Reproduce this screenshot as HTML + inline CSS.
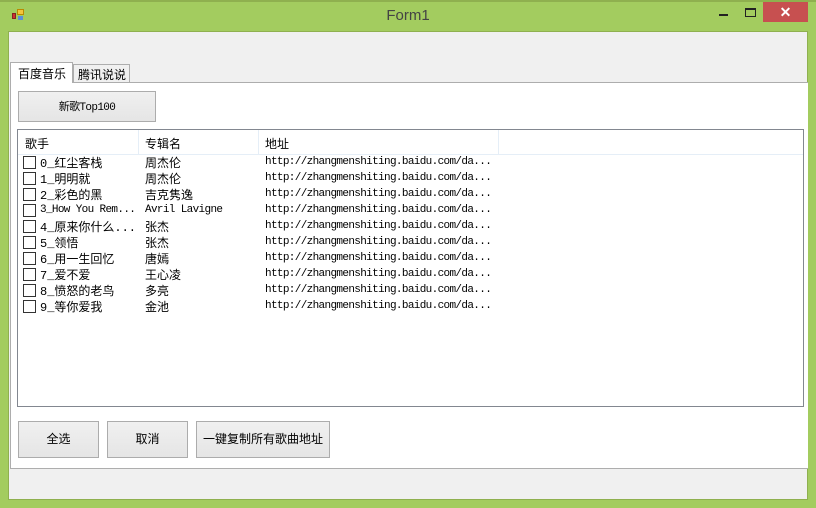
<!DOCTYPE html><html><head><style>
*{margin:0;padding:0;box-sizing:border-box}
body{width:816px;height:508px;background:#a3cc5f;position:relative;overflow:hidden;font-family:"Liberation Sans","Noto Sans CJK SC",sans-serif;font-size:12px;color:#000}
.a{position:absolute}
.btn{position:absolute;background:linear-gradient(#f0f0f0,#e5e5e5);border:1px solid #acacac;text-align:center;font-size:12px}
.mono{font-family:"Liberation Mono","Noto Sans CJK SC",monospace;font-size:11px;letter-spacing:-0.65px;white-space:nowrap}
.s{font-family:"Liberation Mono","Noto Sans CJK SC",monospace;font-size:12px;white-space:nowrap}
.row{position:absolute;left:23px;height:16px;width:600px}
.cb{position:absolute;left:0;top:1px;width:13px;height:13px;border:1px solid #333;background:#fff}
</style></head><body>
<div class="a" style="left:0;top:0;width:816px;height:2px;background:#8fb04f"></div>
<div class="a" style="left:12px;top:9px;width:13px;height:12px">
<div class="a" style="left:0;top:4px;width:4px;height:6px;background:#c33;border:1px solid #822"></div>
<div class="a" style="left:5px;top:0;width:7px;height:6px;background:#f3c53a;border:1px solid #b80"></div>
<div class="a" style="left:6px;top:7px;width:5px;height:4px;background:#5a8fd8"></div></div>
<div class="a" style="left:0;top:7px;width:816px;text-align:center;font-size:15px;color:#444">Form1</div>
<div class="a" style="left:719px;top:14px;width:9px;height:2px;background:#222"></div>
<div class="a" style="left:745px;top:8px;width:11px;height:9px;border:1px solid #222;border-top-width:2px"></div>
<div class="a" style="left:763px;top:2px;width:45px;height:20px;background:#c75050;color:#fff;text-align:center;font-size:14px;line-height:20px;font-weight:bold">✕</div>
<div class="a" style="left:8px;top:31px;width:800px;height:469px;background:#f0f0f0;border:1px solid #8fb04f"></div>
<div class="a" style="left:10px;top:82px;width:798px;height:387px;background:#fff;border:1px solid #adadad;border-right:none"></div>
<div class="a" style="left:10px;top:62px;width:63px;height:21px;background:#fff;border:1px solid #adadad;border-bottom:none;padding:2px 0 0 7px">百度音乐</div>
<div class="a" style="left:73px;top:64px;width:57px;height:18px;background:#f0f0f0;border:1px solid #adadad;border-bottom:none;padding:1px 0 0 4px">腾讯说说</div>
<div class="btn" style="left:18px;top:91px;width:138px;height:31px;line-height:29px"><span class="mono">新歌Top100</span></div>
<div class="a" style="left:17px;top:129px;width:787px;height:278px;border:1px solid #828790;background:#fff"></div>
<div class="a" style="left:18px;top:130px;width:785px;height:25px;border-bottom:1px solid #e5eef7"></div>
<div class="a" style="left:138px;top:130px;width:1px;height:24px;background:#e5eef7"></div>
<div class="a" style="left:258px;top:130px;width:1px;height:24px;background:#e5eef7"></div>
<div class="a" style="left:498px;top:130px;width:1px;height:24px;background:#e5eef7"></div>
<div class="a" style="left:25px;top:135px">歌手</div>
<div class="a" style="left:145px;top:135px">专辑名</div>
<div class="a" style="left:265px;top:135px">地址</div>
<div class="row" style="top:155px"><div class="cb"></div><span class="a s" style="left:17px;top:-1px">0_红尘客栈</span><span class="a" style="left:122px;top:-1px">周杰伦</span><span class="a mono" style="left:242px;top:1px">http://zhangmenshiting.baidu.com/da...</span></div>
<div class="row" style="top:171px"><div class="cb"></div><span class="a s" style="left:17px;top:-1px">1_明明就</span><span class="a" style="left:122px;top:-1px">周杰伦</span><span class="a mono" style="left:242px;top:1px">http://zhangmenshiting.baidu.com/da...</span></div>
<div class="row" style="top:187px"><div class="cb"></div><span class="a s" style="left:17px;top:-1px">2_彩色的黑</span><span class="a" style="left:122px;top:-1px">吉克隽逸</span><span class="a mono" style="left:242px;top:1px">http://zhangmenshiting.baidu.com/da...</span></div>
<div class="row" style="top:203px"><div class="cb"></div><span class="a mono" style="left:17px;top:1px">3_How You Rem...</span><span class="a mono" style="left:122px;top:1px">Avril Lavigne</span><span class="a mono" style="left:242px;top:1px">http://zhangmenshiting.baidu.com/da...</span></div>
<div class="row" style="top:219px"><div class="cb"></div><span class="a s" style="left:17px;top:-1px">4_原来你什么...</span><span class="a" style="left:122px;top:-1px">张杰</span><span class="a mono" style="left:242px;top:1px">http://zhangmenshiting.baidu.com/da...</span></div>
<div class="row" style="top:235px"><div class="cb"></div><span class="a s" style="left:17px;top:-1px">5_领悟</span><span class="a" style="left:122px;top:-1px">张杰</span><span class="a mono" style="left:242px;top:1px">http://zhangmenshiting.baidu.com/da...</span></div>
<div class="row" style="top:251px"><div class="cb"></div><span class="a s" style="left:17px;top:-1px">6_用一生回忆</span><span class="a" style="left:122px;top:-1px">唐嫣</span><span class="a mono" style="left:242px;top:1px">http://zhangmenshiting.baidu.com/da...</span></div>
<div class="row" style="top:267px"><div class="cb"></div><span class="a s" style="left:17px;top:-1px">7_爱不爱</span><span class="a" style="left:122px;top:-1px">王心凌</span><span class="a mono" style="left:242px;top:1px">http://zhangmenshiting.baidu.com/da...</span></div>
<div class="row" style="top:283px"><div class="cb"></div><span class="a s" style="left:17px;top:-1px">8_愤怒的老鸟</span><span class="a" style="left:122px;top:-1px">多亮</span><span class="a mono" style="left:242px;top:1px">http://zhangmenshiting.baidu.com/da...</span></div>
<div class="row" style="top:299px"><div class="cb"></div><span class="a s" style="left:17px;top:-1px">9_等你爱我</span><span class="a" style="left:122px;top:-1px">金池</span><span class="a mono" style="left:242px;top:1px">http://zhangmenshiting.baidu.com/da...</span></div>
<div class="btn" style="left:18px;top:421px;width:81px;height:37px;line-height:35px">全选</div>
<div class="btn" style="left:107px;top:421px;width:81px;height:37px;line-height:35px">取消</div>
<div class="btn" style="left:196px;top:421px;width:134px;height:37px;line-height:35px">一键复制所有歌曲地址</div>
</body></html>
